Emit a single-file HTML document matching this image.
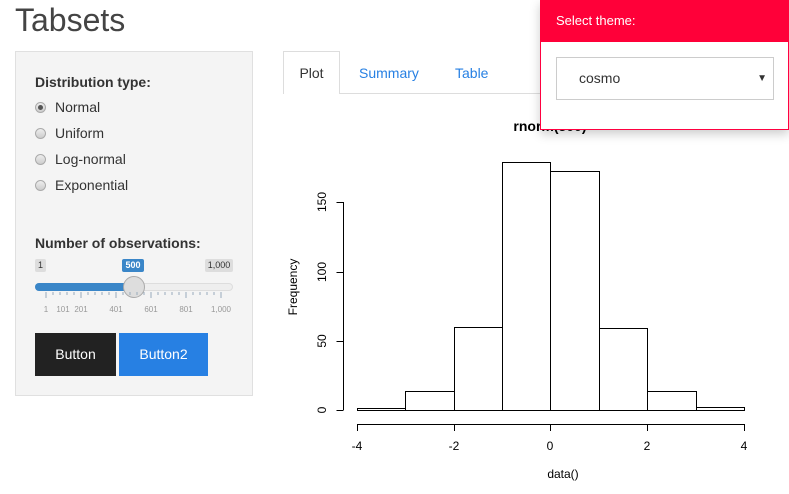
<!DOCTYPE html>
<html><head><style>
body{margin:0;width:789px;height:494px;overflow:hidden;background:#fff;font-family:"Liberation Sans",sans-serif;position:relative;color:#333}
.a{position:absolute}
h1{position:absolute;left:15px;top:2px;margin:0;font-weight:300;font-size:32px;color:#444}
.well{left:15px;top:51px;width:236px;height:343px;background:#f4f4f4;border:1px solid #e0e0e0}
.lbl{font-weight:bold;font-size:14px;color:#333}
.r{font-size:14px;color:#333}
.rad{width:11px;height:11px;border-radius:50%;border:1px solid #aaa;background:linear-gradient(#eee,#ccc);box-sizing:border-box}
</style></head><body>
<h1>Tabsets</h1>
<div class="a well"></div>
<div class="a lbl" style="left:35px;top:74px">Distribution type:</div>
<div class="a rad" style="left:35px;top:102px"><div style="width:5px;height:5px;border-radius:50%;background:#555;margin:2px"></div></div>
<div class="a r" style="left:55px;top:99px">Normal</div>
<div class="a rad" style="left:35px;top:128px"></div><div class="a r" style="left:55px;top:125px">Uniform</div>
<div class="a rad" style="left:35px;top:154px"></div><div class="a r" style="left:55px;top:151px">Log-normal</div>
<div class="a rad" style="left:35px;top:180px"></div><div class="a r" style="left:55px;top:177px">Exponential</div>
<div class="a lbl" style="left:35px;top:235px">Number of observations:</div>
<div class="a" style="left:35px;top:259px;width:11px;height:13px;background:#ddd;font-size:9px;text-align:center;line-height:13px;border-radius:2px">1</div>
<div class="a" style="left:122px;top:259px;width:22px;height:13px;background:#3a86c8;color:#fff;font-size:9px;font-weight:bold;text-align:center;line-height:13px;border-radius:2px">500</div>
<div class="a" style="left:205px;top:259px;width:28px;height:13px;background:#ddd;font-size:9px;text-align:center;line-height:13px;border-radius:2px">1,000</div>
<div class="a" style="left:35px;top:283px;width:198px;height:8px;border-radius:4px;background:#eee;border:1px solid #ddd;box-sizing:border-box"></div>
<div class="a" style="left:35px;top:283px;width:100px;height:8px;border-radius:4px 0 0 4px;background:#3a86c8"></div>
<div class="a" style="left:123px;top:276px;width:22px;height:22px;border-radius:50%;background:#ddd;border:1px solid #aaa;box-sizing:border-box"></div>
<svg class="a" style="left:35px;top:291px" width="200" height="25">
<g stroke="#9ab" stroke-width="1">
<path d="M11 1v6M46 1v6M81 1v6M116 1v6M151 1v6M186 1v6M18 1v3M25 1v3M32 1v3M39 1v3M53 1v3M60 1v3M67 1v3M74 1v3M88 1v3M95 1v3M102 1v3M109 1v3M123 1v3M130 1v3M137 1v3M144 1v3M158 1v3M165 1v3M172 1v3M179 1v3"/></g>
<g font-size="8" fill="#999" text-anchor="middle"><text x="11" y="21">1</text><text x="28" y="21">101</text><text x="46" y="21">201</text><text x="81" y="21">401</text><text x="116" y="21">601</text><text x="151" y="21">801</text><text x="186" y="21">1,000</text></g></svg>
<div class="a" style="left:35px;top:333px;width:81px;height:43px;background:#222;color:#fff;font-size:14px;text-align:center;line-height:43px">Button</div>
<div class="a" style="left:119px;top:333px;width:89px;height:43px;background:#2780e3;color:#fff;font-size:14px;text-align:center;line-height:43px">Button2</div>
<div class="a" style="left:283px;top:93px;width:260px;border-top:1px solid #ddd"></div>
<div class="a" style="left:283px;top:51px;width:57px;height:43px;border:1px solid #ddd;border-bottom:none;background:#fff;box-sizing:border-box;font-size:14px;text-align:center;line-height:42px">Plot</div>
<div class="a" style="left:359px;top:65px;font-size:14px;color:#2780e3">Summary</div>
<div class="a" style="left:455px;top:65px;font-size:14px;color:#2780e3">Table</div>
<svg class="a" style="left:0;top:0" width="789" height="494" font-family="Liberation Sans,sans-serif" font-size="12">
<text x="550" y="131" font-weight="bold" font-size="14" text-anchor="middle">rnorm(500)</text>
<g fill="none" stroke="#000" stroke-width="1">
<path d="M357.5 410.5V408.5H405.5V391.5H454.5V327.5H502.5V162.5H550.5V171.5H599.5V328.5H647.5V391.5H696.5V407.5H744.5V410.5Z"/>
<path d="M405.5 410V391M454.5 410V328M502.5 410V163M550.5 410V163M599.5 410V329M647.5 410V392M696.5 410V408"/>
<path d="M357.5 410.5H744.5"/>
<path d="M343.5 202V410M343.5 410.5h-7M343.5 341.5h-7M343.5 272.5h-7M343.5 202.5h-7"/>
<path d="M357 424.5H744M357.5 424v7M454.5 424v7M550.5 424v7M647.5 424v7M744.5 424v7"/>
</g>
<g text-anchor="middle"><text x="357" y="450">-4</text><text x="454" y="450">-2</text><text x="550" y="450">0</text><text x="647" y="450">2</text><text x="744" y="450">4</text>
<text x="563" y="478">data()</text>
<text transform="translate(326,410) rotate(-90)">0</text><text transform="translate(326,341) rotate(-90)">50</text><text transform="translate(326,272) rotate(-90)">100</text><text transform="translate(326,202) rotate(-90)">150</text>
<text transform="translate(297,287) rotate(-90)">Frequency</text></g>
</svg>
<div class="a" style="left:540px;top:0;width:249px;height:130px;background:#fff;border:1px solid #ff0040;box-sizing:border-box;box-shadow:0 4px 10px rgba(0,0,0,.2)"></div>
<div class="a" style="left:540px;top:0;width:249px;height:42px;background:#ff0039;color:#fff;font-size:13px;line-height:42px;padding-left:16px;box-sizing:border-box">Select theme:</div>
<div class="a" style="left:556px;top:57px;width:218px;height:43px;border:1px solid #ccc;box-sizing:border-box;font-size:14px;line-height:41px;padding-left:22px">cosmo<span style="position:absolute;right:6px;font-size:10px">▼</span></div>
</body></html>
